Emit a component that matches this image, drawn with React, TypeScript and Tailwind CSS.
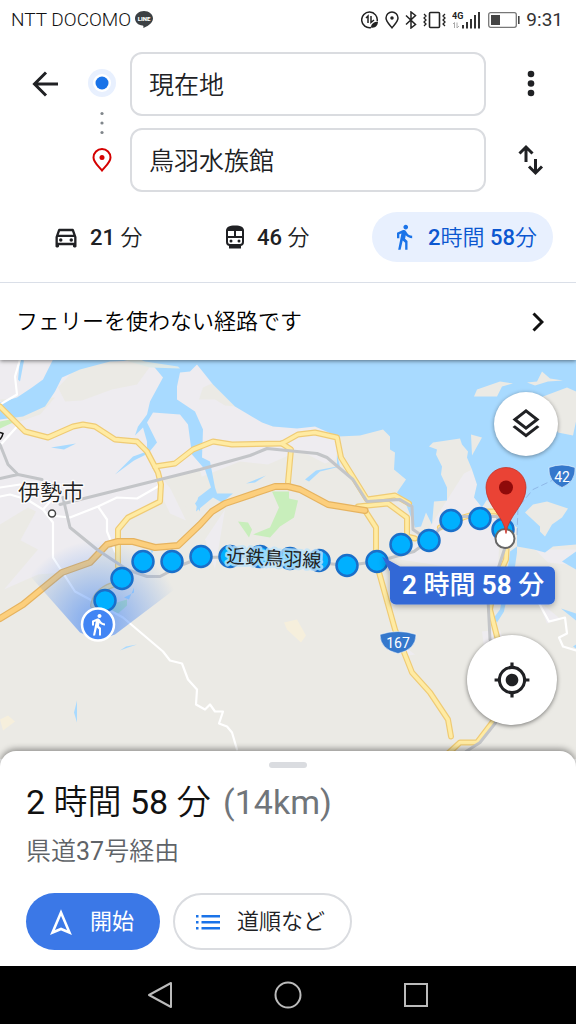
import type { ReactNode } from 'react';
import { MdDirectionsWalk, MdGpsFixed, MdOutlineDirectionsCar, MdOutlineLayers } from 'react-icons/md';

const ROUTE_DOTS = [
  [105, 601], [122, 579], [143, 562], [172, 562], [201, 557], [230, 557],
  [260, 557], [290, 559], [319, 561], [347, 566], [377, 562], [401, 545],
  [429, 541], [451, 521], [480, 519], [503, 530],
];

const YELLOW_ROADS = [
  'M0 407 25 432 48 438 73 427 83 425 95 427 115 440 137 442 147 452 158 473 161 485 160 502 128 518 118 530 118 567',
  'M155 467 175 464 193 450 213 442 232 445 282 444 298 435 315 433 337 438 341 458 367 500 395 496 409 504',
  'M282 444 291 450 288 483',
  'M358 507 388 504 407 518 407 537 415 539',
  'M365 511 376 528 376 562 395 630 412 673 430 693 448 720 451 737',
  'M440 528 463 518 483 512 497 512 508 522 506 560 494 587 490 610 497 637 510 680 493 722 477 743 460 743 448 754',
  'M118 584Q96 589 93 606',
];

const ORANGE_ROAD =
  'M0 619 23 605 62 573 90 563 107 545 118 542 133 542 155 548 178 546 200 525 212 512 225 504 275 487 288 487 300 490 328 505 365 511';

const RAILWAYS = [
  'M0 445 8 465 18 475 42 480M0 479 18 475M63 498 70 528 97 550 127 570 147 577 160 577 183 565 201 558 260 557 347 566 377 562 414 552 429 541 451 517 497 517 503 530 505 548 488 600 490 640 512 690 495 724 480 743 466 752',
  'M60 505 200 470 250 456 267 449 317 454 327 458 353 480 367 502 400 500 412 507 413 530 429 541',
];

const WHITE_ROADS = [
  'M20 360 15 377 17 395 0 405M0 446 18 426M0 488 20 485M0 497 10 495 27 500 43 510 53 523 53 558 75 592 90 600 123 618 163 652 170 661 182 664 188 680 197 690 196 705 205 710 210 705 215 712 223 712 219 724 227 727 232 733 237 750',
  'M43 510 50 502M50 516 70 518 98 507 117 498 137 499 158 487M98 507 107 520 107 532 115 552',
  'M537 600 549 622 565 618 567 634 559 638 563 647 576 651',
];

function StatusBar() {
  return (
    <div className="flex h-10 items-center justify-between pl-[11px] pr-[13px] text-[19px] text-[#333]">
      <div className="flex items-center gap-1">
        <span className="font-light text-[#111]">NTT DOCOMO</span>
        <svg width="18" height="18" viewBox="0 0 18 18" aria-hidden="true">
          <path d="M9 0C4 0 0 3.300 0 7.400c0 3.700 3.200 6.600 7.500 7.200 1.200.2 1 1 .8 2.400C11 15.900 18 12.400 18 7.400 18 3.300 14 0 9 0Z" fill="#3c4043" />
          <text x="9" y="9.500" textAnchor="middle" fontSize="6" fontWeight="900" fill="#fff">LINE</text>
        </svg>
      </div>
      <div className="flex items-center gap-1.5">
        <svg width="18" height="18" viewBox="0 0 18 18" fill="none" stroke="#222" strokeWidth="1.500" aria-hidden="true">
          <path d="M16.200 10A7.800 7.800 0 1 0 10 16.500M5 7l2-2v7M10 5v6.500l3-2.500" />
          <path d="M10 16.500c0-4 3-5.500 7-6 0 4-3 7-7 6Z" fill="#222" stroke="none" />
        </svg>
        <svg width="14" height="18" viewBox="0 0 14 18" fill="none" stroke="#222" strokeWidth="1.500" aria-hidden="true">
          <path d="M7 16.800C4.500 13.500 1 10.500 1 7a6 6 0 0 1 12 0c0 3.500-3.500 6.500-6 9.800Z" />
          <circle cx="7" cy="7" r="1" fill="#222" />
        </svg>
        <svg width="12" height="18" viewBox="0 0 12 18" fill="none" stroke="#222" strokeWidth="1.500" aria-hidden="true">
          <path d="m1 4.500 9.500 9L6 17V1l4.500 3.500-9.500 9" />
        </svg>
        <svg width="23" height="18" viewBox="0 0 23 18" fill="none" stroke="#222" strokeWidth="1.600" aria-hidden="true">
          <rect x="6.500" y="1.500" width="10" height="15" rx="1" />
          <path d="m1 3 2 2-2 2 2 2-2 2 2 2-2 2M22 3l-2 2 2 2-2 2 2 2-2 2 2 2" strokeWidth="1.300" />
        </svg>
        <svg width="28" height="18" viewBox="0 0 28 18" aria-hidden="true">
          <text x="0" y="7.500" fontSize="9" fontWeight="700" fill="#222">4G</text>
          <path d="m1 13 1.500-1.500V17M5 11.500V17l2-2" fill="none" stroke="#aaa" />
          <path d="M10 14h2v3.500h-2ZM14 11h2v6.500h-2ZM18 8h2v9.500h-2ZM22 4h2v13.500h-2ZM26 1h2v16.500h-2Z" fill="#333" />
        </svg>
        <svg width="32" height="16" viewBox="0 0 32 16" className="ml-0.5" aria-hidden="true">
          <rect x=".7" y=".7" width="27.600" height="14.600" rx="2" fill="none" stroke="#777" strokeWidth="1.300" />
          <path d="M3 3h9v10H3Z" fill="#444" />
          <path d="M30 4h1.600v8H30Z" fill="#444" />
        </svg>
        <span>9:31</span>
      </div>
    </div>
  );
}

function TrainIcon() {
  return (
    <svg width="20" height="24" viewBox="0 0 20 24" fill="none" stroke="#202124" strokeWidth="2" aria-hidden="true">
      <path d="M2 5v12c0 2 1 3 3 3h10c2 0 3-1 3-3V5M2 12h16M10 5v7" />
      <path d="M1 6c0-4 3-5.500 9-5.500S19 2 19 6Z" fill="#202124" stroke="none" />
      <path d="M4 20h12v3.500H4Z" fill="#202124" stroke="none" />
      <circle cx="6" cy="16" r="1.500" fill="#202124" stroke="none" />
      <circle cx="14" cy="16" r="1.500" fill="#202124" stroke="none" />
    </svg>
  );
}

interface ModeTabProps {
  icon: ReactNode;
  active?: boolean;
  children: ReactNode;
}

function ModeTab({ icon, active, children }: ModeTabProps) {
  return (
    <button
      type="button"
      aria-pressed={!!active}
      className={`flex h-[50px] items-center gap-3 rounded-full pl-5 pr-4 text-[22px] ${
        active ? 'bg-[#e8f0fe] text-[#0b57d0]' : 'text-[#202124]'
      }`}
    >
      {icon}
      <span className="whitespace-nowrap font-[350]">{children}</span>
    </button>
  );
}

function DirectionsHeader() {
  const field =
    'h-16 w-full min-w-0 rounded-xl border-2 border-[#dadce0] bg-white px-[17px] pb-0.5 text-[25px] font-[350] text-[#202124] outline-none';
  return (
    <header className="relative z-10 bg-white shadow-[0_1px_4px_rgba(0,0,0,0.5)]">
      <StatusBar />
      <div className="flex pt-3">
        <button type="button" aria-label="戻る" className="flex h-16 w-[90px] shrink-0 items-center justify-center">
          <svg width="26" height="26" viewBox="0 0 26 26" fill="none" stroke="#202124" strokeWidth="3" aria-hidden="true">
            <path d="M26 13H3M14 1.500 2.500 13 14 24.500" />
          </svg>
        </button>
        <div className="mr-4 flex w-6 shrink-0 flex-col items-center justify-between pb-5 pt-[17px]">
          <svg width="28" height="28" viewBox="0 0 28 28" className="shrink-0" aria-hidden="true">
            <circle cx="14" cy="14" r="14" fill="#e8f0fe" />
            <circle cx="14" cy="14" r="9" fill="#fff" />
            <circle cx="14" cy="14" r="6.500" fill="#1a73e8" />
          </svg>
          <svg width="4" height="24" viewBox="0 0 4 24" fill="#80868b" aria-hidden="true">
            <circle cx="2" cy="2.500" r="1.600" />
            <circle cx="2" cy="12" r="1.600" />
            <circle cx="2" cy="21.500" r="1.600" />
          </svg>
          <svg width="20" height="24" viewBox="0 0 20 24" aria-hidden="true">
            <path d="M10 22.500C7 18.500 1.500 14.500 1.500 9.500a8.500 8.500 0 0 1 17 0c0 5-5.500 9-8.500 13Z" fill="none" stroke="#d50000" strokeWidth="2" />
            <circle cx="10" cy="9.500" r="2.500" fill="#d50000" />
          </svg>
        </div>
        <div className="flex min-w-0 flex-1 flex-col gap-3">
          <input aria-label="出発地" defaultValue="現在地" className={field} />
          <input aria-label="目的地" defaultValue="鳥羽水族館" className={field} />
        </div>
        <div className="flex w-[90px] shrink-0 flex-col gap-3">
          <button type="button" aria-label="その他" className="flex h-16 items-center justify-center">
            <svg width="8" height="28" viewBox="0 0 8 28" fill="#202124" aria-hidden="true">
              <circle cx="4" cy="4" r="3.300" />
              <circle cx="4" cy="13.500" r="3.300" />
              <circle cx="4" cy="23" r="3.300" />
            </svg>
          </button>
          <button type="button" aria-label="出発地と目的地を入れ替える" className="flex h-16 items-center justify-center">
            <svg width="26" height="32" viewBox="0 0 26 32" fill="none" stroke="#202124" strokeWidth="3" aria-hidden="true">
              <path d="M8 18V3M1.500 9.500 8 3l6.500 6.500M17.500 15v14M11 22.500l6.500 6.500 6.500-6.500" />
            </svg>
          </button>
        </div>
      </div>
      <div className="flex justify-between border-b border-[#dadfe8] pb-5 pl-[34px] pr-[23px] pt-5">
        <ModeTab icon={<MdOutlineDirectionsCar size={28} className="-mx-0.5" />}>
          <span className="font-medium">21</span> 分
        </ModeTab>
        <ModeTab icon={<TrainIcon />}>
          <span className="font-medium">46</span> 分
        </ModeTab>
        <ModeTab active icon={<MdDirectionsWalk size={28} className="-mx-0.5 text-[#1a73e8]" />}>
          <span className="font-medium">2</span>時間 <span className="font-medium">58</span>分
        </ModeTab>
      </div>
      <button type="button" className="flex h-[77px] w-full items-center justify-between pl-4 pr-8 text-[22px] font-[350] text-black">
        <span>フェリーを使わない経路です</span>
        <svg width="12" height="20" viewBox="0 0 12 20" fill="none" stroke="#111" strokeWidth="3" aria-hidden="true">
          <path d="m1.500 1.500 8.500 8.500-8.500 8.500" />
        </svg>
      </button>
    </header>
  );
}

function RouteMap() {
  return (
    <svg
      viewBox="0 360 576 400"
      preserveAspectRatio="xMidYMid slice"
      className="absolute inset-0 h-full w-full"
      role="img"
      aria-label="鳥羽水族館までの徒歩ルート"
    >
      <defs>
        <radialGradient id="beam" gradientUnits="userSpaceOnUse" cx="98" cy="625" r="84">
          <stop offset="0" stopColor="#4285f4" stopOpacity="0.7" />
          <stop offset="1" stopColor="#4285f4" stopOpacity="0" />
        </radialGradient>
        <filter id="soft" x="-20%" y="-20%" width="140%" height="160%">
          <feDropShadow dx="0" dy="2" stdDeviation="3" floodOpacity="0.3" />
        </filter>
      </defs>
      <path d="M0 360h576v400H0Z" fill="#ebeae5" />

      {/* built-up areas */}
      <g fill="#eeecf0">
        <path d="M0 360H180L197 365 235 407 273 427 315 427 338 437 336 460 325 464 300 451 268 465 240 462 200 478 162 480 160 500 125 520 112 545 90 563 62 573 38 575 4 590 38 550 0 530Z" />
        <path d="M165 478 186 521 170 514 158 488ZM464 474 472 470 477 485 474 498 500 520 498 575 400 560 425 535ZM535 550h41v16l-28-3ZM482 632l18-2 8 28-22 6ZM205 540l20-30-10 60ZM537 600l24 20-14 4ZM395 640l20 15-12 2Z" />
      </g>
      <g fill="#ebeae5">
        <path d="M58 388 75 370 108 362 153 363 137 385 112 390 82 401 65 402ZM0 400 55 398 40 415 12 425ZM0 525 28 508 36 512 10 560 0 560ZM203 388 214 383 235 407 225 406 215 400 199 400ZM163 480 200 470 205 490 196 520 180 500Z" />
      </g>

      {/* sea, rivers and ponds */}
      <g fill="#a8daff">
        <path d="M53 360 43 380 32 388 17 398 0 403V420L23 417 45 407 55 392 62 378 80 370 110 362 135 361 153 366 163 378 150 402 147 415 138 427 135 436 143 428 147 442 147 452 133 457 115 475 134 461 148 454 157 443 147 423 153 413 180 415 188 425 192 455 205 470 211 488 198 498 196 512 213 498 222 503 233 494 217 494 215 488 210 462 202 458 203 430 195 412 177 400 177 387 180 373 190 372 197 365 213 385 235 407 262 423 273 427 297 429 315 427 338 437 360 436 383 430 390 437 390 450 395 453 394 470 406 480 397 493 405 502 415 528 421 527 426 513 432 525 434 502 447 501 447 488 441 475 442 467 436 455 437 450 429 447 433 443 460 439 462 445 468 452 467 458 472 470 477 485 474 498 482 508 487 500 497 512 517 528 517 553 515 567 505 607 504 612 497 623 494 618 500 610 508 567 510 552 517 547 534 550 545 553 553 547 576 545V360Z" />
        <path d="M24 361 20 382 18 380 20 360ZM51 448 76 444 64 450ZM246 484 266 476 255 483ZM305 480 316 471 337 467 337 455 340 467 320 472 309 482ZM120 651 126 647 137 645 128 648ZM77 701V723L74 713ZM129 600 134 588 134 593 124 598ZM562 562 576 552V570ZM561 609 576 614V621ZM150 550l6-4-4 8ZM200 497v15l-5-8ZM573 647l3-2v4Z" />
      </g>
      <g fill="#ebeae5">
        <path d="M474 397 477 390 500 382 513 384 502 387 497 397ZM527 383 537 382 542 372 550 379 563 381 548 382 535 386ZM543 397 567 388 576 392V422L573 436 558 433 545 410ZM471 435 482 438 472 456ZM525 513 533 505 547 502 568 509 562 518 552 525 545 537 540 532 540 527Z" />
        <path d="M122 360 150 368 180 369 178 367 145 362 140 360Z" fill="#dfeae9" />
      </g>

      {/* parks */}
      <g fill="#c8eebb">
        <path d="M272 492 289 492 289 499 298 501 294 518 280 527 270 538 253 535 270 528 279 508ZM238 522 248 523 252 530 249 538ZM0 422 10 420 13 423 0 429ZM111 612 117 603 127 600 127 606 117 615Z" />
      </g>
      <path d="M284 623 297 620 306 636 301 643 287 630ZM0 720 8 716 15 722 3 731Z" fill="#f6efdc" />

      <g fill="none" strokeLinejoin="round" strokeLinecap="round">
        <g stroke="#fff" strokeWidth="2.200">
          {WHITE_ROADS.map((d) => <path key={d} d={d} />)}
        </g>
        <g stroke="#efcb75" strokeWidth="6">
          {YELLOW_ROADS.map((d) => <path key={d} d={d} />)}
        </g>
        <g stroke="#ffeba3" strokeWidth="3.600">
          {YELLOW_ROADS.map((d) => <path key={d} d={d} />)}
        </g>
        <path d={ORANGE_ROAD} stroke="#e6b35f" strokeWidth="7" />
        <path d={ORANGE_ROAD} stroke="#fccf7d" strokeWidth="4.600" />
        <g stroke="#c3c5c8" strokeWidth="3">
          {RAILWAYS.map((d) => <path key={d} d={d} />)}
        </g>
        <path d="M517 535 518 508 533 490 552 481" stroke="#8fb8e8" strokeDasharray="6 4" />
      </g>

      <path d="M98 641 80 633 20 565 98 520 185 582 115 635Z" fill="url(#beam)" />

      <g fill="#00b0ff" stroke="#1a6fc9" strokeWidth="2.500">
        {ROUTE_DOTS.map(([x, y]) => <circle key={x} cx={x} cy={y} r="10.500" />)}
      </g>

      <g fill="#222" strokeLinejoin="round" paintOrder="stroke">
        <text x="18" y="500" fontSize="22" fontWeight="350" stroke="#fff" strokeWidth="3" strokeOpacity="0.8">伊勢市</text>
        <text x="226" y="563" fontSize="19" stroke="#bfe4fb" strokeWidth="5" strokeOpacity="0.8" transform="rotate(3 226 563)">
          近鉄鳥羽線
        </text>
      </g>
      <circle cx="52" cy="514" r="3.500" fill="#fff" stroke="#444" strokeWidth="1.500" />
      <path d="M0 433l3 1-1 3-2 3" fill="none" stroke="#111" strokeWidth="1.500" />

      {/* national route shields */}
      <g fill="#3578cc" stroke="#fff" strokeOpacity="0.5">
        <path d="M380 635Q398 629 416 635 416 650 398 654 380 650 380 635Z" />
        <path d="M549 468Q562 463 575 468 576 482 562 488 548 482 549 468Z" />
      </g>
      <g fill="#fff" fontSize="14" textAnchor="middle">
        <text x="398" y="648">167</text>
        <text x="562" y="482">42</text>
      </g>

      {/* current position */}
      <circle cx="98" cy="625" r="16" fill="#4285f4" stroke="#fff" strokeWidth="2.500" />
      <MdDirectionsWalk x="86" y="613" size={24} color="#fff" />

      {/* destination */}
      <circle cx="505" cy="539" r="9.500" fill="#fff" stroke="#666" strokeWidth="2" />
      <path d="M506 534C504 516 486 506 486 488a20 20 0 0 1 40 0C526 506 508 516 506 534Z" fill="#ea4335" stroke="#c5352b" strokeWidth=".8" />
      <circle cx="506" cy="488" r="7" fill="#8f0a0a" />

      <g filter="url(#soft)">
        <path d="M382 557 400 567H549a6 6 0 0 1 6 6V599a6 6 0 0 1-6 6H396a6 6 0 0 1-6-6V572Z" fill="#3367d6" />
      </g>
      <text x="402" y="594" fontSize="26" fontWeight="500" fill="#fff">
        <tspan fontWeight="700">2</tspan> 時間 <tspan fontWeight="700">58</tspan> 分
      </text>
    </svg>
  );
}

function MapArea() {
  return (
    <main className="relative min-h-[399px] flex-1 overflow-hidden">
      <RouteMap />
      <button
        type="button"
        aria-label="レイヤ"
        className="absolute right-[18px] top-8 flex size-16 items-center justify-center rounded-full bg-white shadow-[0_1px_4px_rgba(0,0,0,0.4)]"
      >
        <MdOutlineLayers size={36} color="#202124" />
      </button>
      <button
        type="button"
        aria-label="現在地を表示"
        className="absolute bottom-[34px] right-[19px] flex size-[90px] items-center justify-center rounded-full bg-white shadow-[0_1px_4px_rgba(0,0,0,0.5)]"
      >
        <MdGpsFixed size={38} color="#202124" />
      </button>
    </main>
  );
}

function RouteSheet() {
  return (
    <section className="relative z-10 -mt-2 rounded-t-2xl bg-white px-[26px] pb-4 pt-[11px] shadow-[0_-2px_6px_rgba(0,0,0,0.4)]">
      <div className="mx-auto h-1.5 w-[38px] rounded-full bg-[#dadce0]" />
      <h1 className="mt-2.5 text-[34px] font-normal leading-[48px] text-[#111]">
        2 <span className="font-[350]">時間</span> 58 <span className="font-[350]">分</span>{' '}
        <span className="ml-1 text-[#70757a]">(14km)</span>
      </h1>
      <p className="mt-1.5 text-[25px] font-[350] leading-10 text-[#5f6368]">
        県道<span className="font-normal">37</span>号経由
      </p>
      <div className="mt-[21px] flex gap-[13px]">
        <button type="button" className="flex h-[57px] w-[134px] items-center gap-[18px] rounded-full bg-[#3b78e7] pl-6 text-[22px] text-white">
          <svg width="22" height="26" viewBox="0 0 22 26" fill="none" stroke="#fff" strokeWidth="2.600" aria-hidden="true">
            <path d="M11 3.500 2.500 23.500 11 20l8.500 3.500Z" />
          </svg>
          開始
        </button>
        <button type="button" className="flex h-[57px] w-[179px] items-center gap-4 rounded-full border-2 border-[#dadce0] bg-white pl-5 text-[22px] font-[350] text-[#202124]">
          <svg width="26" height="16" viewBox="0 0 26 16" fill="#1a73e8" aria-hidden="true">
            <path d="M1 1h2.500v2.500H1ZM1 7h2.500v2.500H1ZM1 13h2.500v2.500H1ZM6.500 1H25v2.500H6.500ZM6.500 7H25v2.500H6.500ZM6.500 13H25v2.500H6.500Z" />
          </svg>
          道順など
        </button>
      </div>
    </section>
  );
}

function NavigationBar() {
  return (
    <nav className="relative z-10 flex h-[58px] items-center justify-center gap-[100px] bg-black">
      <button type="button" aria-label="前の画面">
        <svg width="28" height="28" viewBox="0 0 28 28" fill="none" stroke="#bbb" strokeWidth="2" strokeLinejoin="round" aria-hidden="true">
          <path d="M25 2v24L3 14Z" />
        </svg>
      </button>
      <button type="button" aria-label="ホーム">
        <svg width="28" height="28" viewBox="0 0 28 28" fill="none" stroke="#bbb" strokeWidth="2" aria-hidden="true">
          <circle cx="14" cy="14" r="12.500" />
        </svg>
      </button>
      <button type="button" aria-label="アプリ履歴">
        <svg width="28" height="28" viewBox="0 0 28 28" fill="none" stroke="#bbb" strokeWidth="2" aria-hidden="true">
          <path d="M3 3h22v22H3Z" />
        </svg>
      </button>
    </nav>
  );
}

export default function App() {
  return (
    <div lang="ja" className="flex min-h-screen flex-col bg-white font-[Roboto,'Noto_Sans_CJK_JP',sans-serif]">
      <DirectionsHeader />
      <MapArea />
      <RouteSheet />
      <NavigationBar />
    </div>
  );
}
